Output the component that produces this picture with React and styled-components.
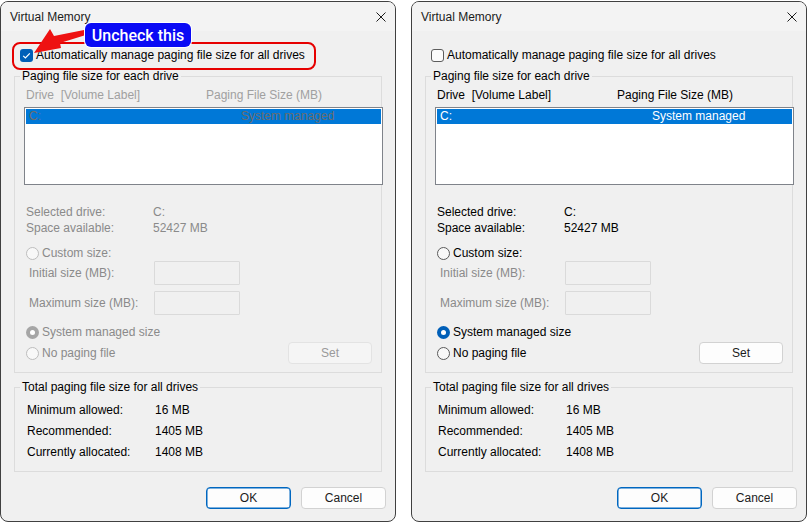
import styled, { createGlobalStyle } from "styled-components";

const GlobalStyle = createGlobalStyle`
  html, body {
    margin: 0;
    background: #ffffff;
  }
  body {
    font-family: "Liberation Sans", Arial, sans-serif;
    font-size: 12px;
    color: #000;
  }
`;

const DISABLED = "#8a8a8a";

export default function App() {
  return (
    <>
      <GlobalStyle />
      <Page>
        <Dialog autoManage annotated />
        <Dialog />
      </Page>
    </>
  );
}

function Dialog({ autoManage = false, annotated = false }) {
  const off = autoManage;

  return (
    <Window>
      <TitleBar>
        <span>Virtual Memory</span>
        <CloseIcon viewBox="0 0 10 10">
          <path d="M0.5 0.5 L9.5 9.5 M9.5 0.5 L0.5 9.5" stroke="#1b1b1b" strokeWidth="1" />
        </CloseIcon>
      </TitleBar>

      <Body>
        <CheckRow>
          <Checkbox $checked={autoManage}>
            {autoManage && (
              <svg viewBox="0 0 13 13" width="13" height="13">
                <path d="M3.2 6.8 L5.4 9 L9.8 4.3" fill="none" stroke="#fff" strokeWidth="1.2" />
              </svg>
            )}
          </Checkbox>
          <span>Automatically manage paging file size for all drives</span>
        </CheckRow>

        <Group>
          <Legend>Paging file size for each drive</Legend>
          <ColumnHeader $off={off}>
            <span>Drive&nbsp;&nbsp;[Volume Label]</span>
            <span>Paging File Size (MB)</span>
          </ColumnHeader>
          <ListBox>
            <ListRow $off={off}>
              <span>C:</span>
              <span>System managed</span>
            </ListRow>
          </ListBox>

          <InfoGrid $off={off}>
            <span>Selected drive:</span>
            <span>C:</span>
            <span>Space available:</span>
            <span>52427 MB</span>
          </InfoGrid>

          <RadioRow $off={off} $top={9}>
            <Radio $off={off} />
            <span>Custom size:</span>
          </RadioRow>
          <SizeRow $top={0}>
            <span>Initial size (MB):</span>
            <TextBox disabled />
          </SizeRow>
          <SizeRow $top={6}>
            <span>Maximum size (MB):</span>
            <TextBox disabled />
          </SizeRow>

          <RadioRow $off={off} $top={9}>
            <Radio $off={off} $checked />
            <span>System managed size</span>
          </RadioRow>
          <BottomRow>
            <RadioRow $off={off} $top={0}>
              <Radio $off={off} />
              <span>No paging file</span>
            </RadioRow>
            <Button $off={off} $width={84}>
              Set
            </Button>
          </BottomRow>
        </Group>

        <TotalGroup>
          <Legend>Total paging file size for all drives</Legend>
          <TotalsGrid>
            <span>Minimum allowed:</span>
            <span>16 MB</span>
            <span>Recommended:</span>
            <span>1405 MB</span>
            <span>Currently allocated:</span>
            <span>1408 MB</span>
          </TotalsGrid>
        </TotalGroup>

        <Footer>
          <Button $primary $width={85}>
            OK
          </Button>
          <Button $width={85}>Cancel</Button>
        </Footer>
      </Body>

      {annotated && (
        <>
          <Highlight />
          <Arrow viewBox="0 0 100 60">
            <polygon
              points="33,51 49,27 53,34 88,27 88,32 59,41 60,46"
              fill="#ee1111"
            />
          </Arrow>
          <Badge>Uncheck this</Badge>
        </>
      )}
    </Window>
  );
}

const Page = styled.div`
  display: flex;
  gap: 15px;
  padding-top: 1px;
`;

const Window = styled.div`
  position: relative;
  box-sizing: border-box;
  width: 396px;
  height: 521px;
  border: 1px solid #404040;
  border-radius: 8px;
  background: #f0f0f0;
  overflow: hidden;
  display: flex;
  flex-direction: column;
`;

const TitleBar = styled.div`
  height: 29px;
  flex-shrink: 0;
  display: flex;
  align-items: center;
  justify-content: space-between;
  padding: 0 9px 0 9px;
  background: #f3f3f3;
  color: #1b1b1b;
`;

const CloseIcon = styled.svg`
  width: 10px;
  height: 10px;
`;

const Body = styled.div`
  display: flex;
  flex-direction: column;
  padding: 0 9px 0 13px;
`;

const CheckRow = styled.label`
  display: flex;
  align-items: center;
  gap: 3px;
  height: 16px;
  margin: 16px 0 0 6px;
`;

const Checkbox = styled.span`
  box-sizing: border-box;
  width: 13px;
  height: 13px;
  border-radius: 3px;
  display: inline-flex;
  background: ${(p) => (p.$checked ? "#005fb8" : "#fbfbfb")};
  border: ${(p) => (p.$checked ? "none" : "1px solid #5c5c5c")};
`;

const Group = styled.fieldset`
  margin: 5px 4px 0 0;
  padding: 0 9px 8px 0;
  border: 1px solid #dcdcdc;
  min-width: 0;
  display: flex;
  flex-direction: column;
`;

const TotalGroup = styled(Group)`
  margin-top: 6px;
`;

const Legend = styled.legend`
  margin-left: 5px;
  padding: 0 2px;
  line-height: 16px;
  color: #000;
`;

const ColumnHeader = styled.div`
  display: grid;
  grid-template-columns: 180px 1fr;
  height: 16px;
  line-height: 16px;
  margin-top: 3px;
  padding-left: 11px;
  color: ${(p) => (p.$off ? "#a0a0a0" : "#000")};
  white-space: nowrap;
`;

const ListBox = styled.div`
  box-sizing: border-box;
  width: 359px;
  height: 78px;
  margin: 4px 0 0 9px;
  padding: 1px;
  border: 1px solid #7f838a;
  background: #ffffff;
`;

const ListRow = styled.div`
  display: grid;
  grid-template-columns: 212px 1fr;
  height: 15px;
  line-height: 15px;
  padding-left: 3px;
  background: #0078d7;
  color: ${(p) => (p.$off ? "#6d6d6d" : "#ffffff")};
`;

const InfoGrid = styled.div`
  display: grid;
  grid-template-columns: 127px 1fr;
  grid-auto-rows: 16px;
  line-height: 16px;
  margin-top: 19px;
  padding-left: 11px;
  color: ${(p) => (p.$off ? DISABLED : "#000")};
`;

const RadioRow = styled.label`
  display: flex;
  align-items: center;
  gap: 3px;
  height: 16px;
  margin-top: ${(p) => p.$top}px;
  padding-left: 11px;
  color: ${(p) => (p.$off ? DISABLED : "#000")};
`;

const Radio = styled.span`
  position: relative;
  box-sizing: border-box;
  width: 13px;
  height: 13px;
  border-radius: 50%;
  background: ${(p) =>
    p.$checked ? (p.$off ? "#a6a6a6" : "#005fb8") : "#f8f8f8"};
  border: ${(p) =>
    p.$checked ? "none" : p.$off ? "1px solid #bdbdbd" : "1px solid #5a5a5a"};

  &::after {
    content: "";
    display: ${(p) => (p.$checked ? "block" : "none")};
    position: absolute;
    left: 4px;
    top: 4px;
    width: 5px;
    height: 5px;
    border-radius: 50%;
    background: #ffffff;
  }
`;

const SizeRow = styled.label`
  display: grid;
  grid-template-columns: 125px 86px;
  align-items: center;
  height: 24px;
  margin-top: ${(p) => p.$top}px;
  padding-left: 14px;
  color: ${DISABLED};
`;

const TextBox = styled.input`
  box-sizing: border-box;
  width: 86px;
  height: 24px;
  margin: 0;
  border: 1px solid #dadada;
  border-radius: 1px;
  background: #f0f0f0;
`;

const BottomRow = styled.div`
  display: flex;
  align-items: center;
  justify-content: space-between;
  height: 22px;
  margin-top: 2px;
`;

const Button = styled.button`
  box-sizing: border-box;
  width: ${(p) => p.$width}px;
  height: 22px;
  padding: 0;
  font-family: inherit;
  font-size: 12px;
  border-radius: 4px;
  background: ${(p) => (p.$off ? "#f5f5f5" : "#fdfdfd")};
  color: ${(p) => (p.$off ? "#9a9a9a" : "#1b1b1b")};
  border: 1px solid
    ${(p) => (p.$primary ? "#0067c0" : p.$off ? "#e3e3e3" : "#d2d2d2")};
  box-shadow: ${(p) => (p.$primary ? "inset 0 0 0 0.5px #0067c0" : "none")};
`;

const TotalsGrid = styled.div`
  display: grid;
  grid-template-columns: 128px 1fr;
  grid-auto-rows: 21px;
  line-height: 21px;
  padding: 5px 0 0 12px;
`;

const Footer = styled.div`
  display: flex;
  justify-content: flex-end;
  gap: 10px;
  margin-top: 15px;
`;

const Highlight = styled.div`
  position: absolute;
  left: 11px;
  top: 40px;
  width: 304px;
  height: 28px;
  box-sizing: border-box;
  border: 2px solid #e60000;
  border-radius: 8px;
  pointer-events: none;
`;

const Arrow = styled.svg`
  position: absolute;
  left: 0;
  top: 0;
  width: 100px;
  height: 60px;
  pointer-events: none;
`;

const Badge = styled.div`
  position: absolute;
  left: 84px;
  top: 21px;
  width: 106px;
  height: 24px;
  box-sizing: border-box;
  display: flex;
  align-items: center;
  justify-content: center;
  background: #0a0af5;
  border-radius: 6px;
  box-shadow: 0 0 0 1px #ffffff;
  color: #ffffff;
  font-family: Roboto, "Liberation Sans", sans-serif;
  font-weight: 500;
  font-size: 16px;
`;
